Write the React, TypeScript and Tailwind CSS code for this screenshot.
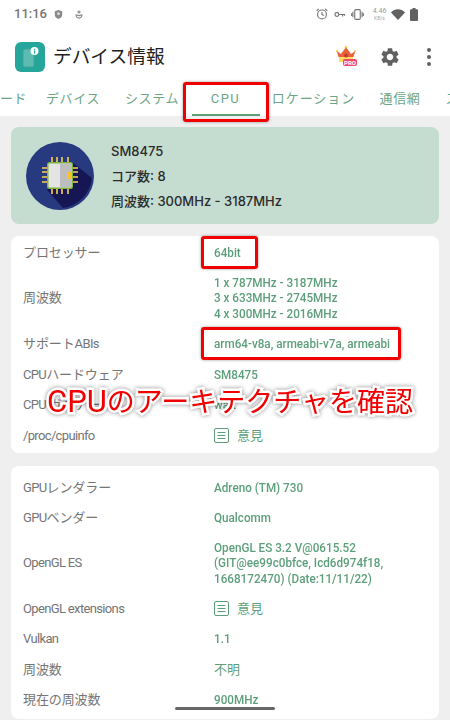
const jp = "font-['Roboto','Noto_Sans_CJK_JP',sans-serif]";

const cpuRows = [
  { label: "プロセッサー", value: ["64bit"], h: "h-[30.5px]" },
  { label: "周波数", value: ["1 x 787MHz - 3187MHz", "3 x 633MHz - 2745MHz", "4 x 300MHz - 2016MHz"], h: "h-[61px]" },
  { label: "サポートABIs", value: ["arm64-v8a, armeabi-v7a, armeabi"], h: "h-[30.5px]" },
  { label: "CPUハードウェア", value: ["SM8475"], h: "h-[30.5px]" },
  { label: "CPU ガバナー", value: ["walt"], h: "h-[30.5px]" },
  { label: "/proc/cpuinfo", view: true, h: "h-[30.5px]" },
];

const gpuRows = [
  { label: "GPUレンダラー", value: ["Adreno (TM) 730"], h: "h-[30.5px]" },
  { label: "GPUベンダー", value: ["Qualcomm"], h: "h-[30.5px]" },
  { label: "OpenGL ES", value: ["OpenGL ES 3.2 V@0615.52", "(GIT@ee99c0bfce, Icd6d974f18,", "1668172470) (Date:11/11/22)"], h: "h-[60px]" },
  { label: "OpenGL extensions", view: true, h: "h-[30.5px]" },
  { label: "Vulkan", value: ["1.1"], h: "h-[30.5px]" },
  { label: "周波数", value: ["不明"], h: "h-[30.5px]" },
  { label: "現在の周波数", value: ["900MHz"], h: "h-[30.5px]" },
];

type RowData = { label: string; value?: string[]; view?: boolean; h: string };

const gearPath =
  "M19.14 12.94c.04-.3.06-.61.06-.94 0-.32-.02-.64-.07-.94l2.03-1.58c.18-.14.23-.41.12-.61l-1.92-3.32c-.12-.22-.37-.29-.59-.22l-2.39.96c-.5-.38-1.03-.7-1.62-.94l-.36-2.54c-.04-.24-.24-.41-.48-.41h-3.84c-.24 0-.43.17-.47.41l-.36 2.54c-.59.24-1.13.57-1.62.94l-2.39-.96c-.22-.08-.47 0-.59.22L2.74 8.87c-.12.21-.08.47.12.61l2.03 1.58c-.05.3-.09.63-.09.94s.02.64.07.94l-2.03 1.58c-.18.14-.23.41-.12.61l1.92 3.32c.12.22.37.29.59.22l2.39-.96c.5.38 1.03.7 1.62.94l.36 2.54c.05.24.24.41.48.41h3.84c.24 0 .44-.17.47-.41l.36-2.54c.59-.24 1.13-.56 1.62-.94l2.39.96c.22.08.47 0 .59-.22l1.92-3.32c.12-.22.07-.47-.12-.61l-2.01-1.58zM12 15.6c-1.98 0-3.6-1.62-3.6-3.6s1.62-3.6 3.6-3.6 3.6 1.62 3.6 3.6-1.62 3.6-3.6 3.6z";

// the app's latin face is narrower than Roboto, so tighten the latin runs only
function Narrow({ text }: { text: string }) {
  const parts = text.split(/([\x20-\x7e]+)/).filter(Boolean);
  return (
    <>
      {parts.map((p, i) =>
        /[\x20-\x7e]/.test(p) ? (
          <span key={i} className="tracking-[-0.65px]">
            {p}
          </span>
        ) : (
          <span key={i}>{p}</span>
        ),
      )}
    </>
  );
}

function ViewLink() {
  return (
    <div className="flex items-center gap-[8px] text-[#5d9f7b]">
      <svg width="15" height="15" viewBox="0 0 15 15" fill="none" stroke="#5d9f7b" strokeWidth="1">
        <rect x="0.5" y="0.5" width="14" height="14" rx="1.5" />
        <path d="M3.500 4.500h8M3.500 7.500h8M3.500 10.500h8" />
      </svg>
      <span className="text-[13px]">意見</span>
    </div>
  );
}

function Row({ label, value, view, h }: RowData) {
  return (
    <div className={`flex items-center ${h}`}>
      <div className="w-[191px] shrink-0 text-[13px] text-[#757575] tracking-[-0.1px]">
        <Narrow text={label} />
      </div>
      {view ? (
        <ViewLink />
      ) : (
        <div className="text-[13px] leading-[15.4px] text-[#5d9f7b] whitespace-nowrap">
          {value?.map((line) => (
            <div key={line} className={/[\x20-\x7e]/.test(line) ? "font-medium origin-left scale-x-[0.9]" : ""}>
              {line}
            </div>
          ))}
        </div>
      )}
    </div>
  );
}

function StatusBar() {
  return (
    <div className="h-[28px] flex items-center pl-[14px] pr-[32px] bg-white text-[#757575]">
      <span className="text-[13px] font-medium">11:16</span>
      <svg className="ml-[7px]" width="9" height="11" viewBox="0 0 11 12" fill="#8a8a8a">
        <path d="M5.500 0.500 10 2v4c0 3-2 4.700-4.500 5.500C3 10.700 1 9 1 6V2z" />
        <circle cx="5.500" cy="5" r="1.800" fill="#d8d8d8" />
      </svg>
      <svg className="ml-[12px]" width="8" height="11" viewBox="0 0 11 12" fill="none" stroke="#8a8a8a" strokeWidth="1.500">
        <circle cx="5.500" cy="2.500" r="1.400" />
        <path d="M1.500 6.500c1 .2 2 1 4 1s3-.8 4-1c.3 2.500-1.500 4.500-4 4.500s-4.300-2-4-4.500z" />
      </svg>
      <div className="flex-1" />
      <svg width="12" height="12" viewBox="0 0 13 13" fill="none" stroke="#757575" strokeWidth="1.200">
        <circle cx="6.500" cy="7" r="4.800" />
        <path d="M6.500 4.200V7l2 1.200M0.800 3 3 0.900M12.200 3 10 0.900" />
      </svg>
      <svg className="ml-[6px]" width="12" height="7" viewBox="0 0 13 8" fill="none" stroke="#757575" strokeWidth="1.300">
        <circle cx="3" cy="4" r="2.200" />
        <path d="M5.200 4h7M9.500 4v2.200M11.700 4v1.500" />
      </svg>
      <svg className="ml-[5px]" width="13" height="11" viewBox="0 0 14 12" fill="none" stroke="#757575" strokeWidth="1.200">
        <rect x="4" y="0.700" width="6" height="10.600" rx="1" />
        <path d="M2 3v6M0.600 4.500v3M12 3v6M13.400 4.500v3" />
      </svg>
      <div className="ml-[7px] w-[17px] text-center">
        <div className="text-[7px] leading-[8px] text-[#9a9a9a]">4.46</div>
        <div className="text-[5px] leading-[6px] text-[#a8a8a8]">KB/s</div>
      </div>
      <svg className="ml-[3px]" width="14" height="11" viewBox="0 0 14 11" fill="#616161">
        <path d="M0 3.500C2 1.300 4.500 0.300 7 0.300s5 1 7 3.200L7 11z" />
      </svg>
      <svg className="ml-[5px]" width="8" height="13" viewBox="0 0 8 13" fill="#616161">
        <path d="M2.500 0h3v1.300H7a1 1 0 0 1 1 1V12a1 1 0 0 1-1 1H1a1 1 0 0 1-1-1V2.300a1 1 0 0 1 1-1h1.500z" />
      </svg>
    </div>
  );
}

function AppIcon() {
  return (
    <div className="w-[30px] h-[30px] rounded-[6px] bg-[#26a69a] flex items-center justify-center">
      <svg width="20" height="22" viewBox="0 0 20 22">
        <rect x="3" y="3" width="11" height="18" rx="1.500" fill="#5dbcb2" stroke="#3aa397" />
        <circle cx="14.500" cy="5" r="4" fill="#ffffff" />
        <rect x="14" y="4.500" width="1.200" height="3" fill="#26a69a" />
        <rect x="14" y="2.700" width="1.200" height="1.200" fill="#26a69a" />
      </svg>
    </div>
  );
}

function ProBadge() {
  return (
    <div className="relative w-[22px] h-[21px]">
      <svg width="20" height="17" viewBox="0 0 20 17">
        <path d="M3 16V9h14v7z" fill="#ffdd63" />
        <path d="M0.800 5 5 8 10 1l5 7 4.200-3L17.500 11h-15z" fill="#e8633a" />
        <circle cx="10" cy="9.500" r="2" fill="#c43c2c" />
        <circle cx="0.900" cy="5" r="1" fill="#ffc233" />
        <circle cx="10" cy="1.200" r="1.200" fill="#ffc233" />
        <circle cx="19.100" cy="5" r="1" fill="#ffc233" />
      </svg>
      <div className="absolute left-[7px] top-[13px] w-[14px] h-[7px] rounded-[2px] bg-[#f0476b] text-white text-[6px] leading-[7px] font-bold text-center">
        PRO
      </div>
    </div>
  );
}

function ChipLogo() {
  return (
    <svg width="68" height="68" viewBox="0 0 68 68">
      <circle cx="34" cy="34" r="34" fill="#273a80" />
      <path d="M47 21 66 36A34 34 0 0 1 37 66L21 48z" fill="#171655" />
      <g stroke="#fbd24e" strokeWidth="1.600">
        <path d="M26 15v6M31 15v6M36 15v6M42 15v6" />
        <path d="M26 46v6M31 46v6M36 46v6M42 46v6" />
        <path d="M16 26h6M16 30h6M16 35h6M16 40h6" />
        <path d="M46 26h6M46 30h6M46 35h6M46 40h6" />
      </g>
      <rect x="21" y="20" width="26" height="27" rx="2.500" fill="#7cb63c" />
      <rect x="22.500" y="21.500" width="23" height="24" rx="1" fill="#e4e4e4" />
      <rect x="34" y="21.500" width="11.500" height="24" fill="#bdbdbd" />
      <rect x="41" y="30" width="4" height="7" fill="#fbc02d" />
    </svg>
  );
}

export default function App() {
  const tabs = [
    { name: "ード", cls: "w-[33.500px] text-right pr-[12.500px] tracking-[0.6px]" },
    { name: "デバイス", cls: "w-[79px] text-center tracking-[0.6px]" },
    { name: "システム", cls: "w-[79px] text-center tracking-[0.6px]" },
    { name: "CPU", cls: "w-[68px] text-center tracking-[1.4px]", active: true },
    { name: "ロケーション", cls: "w-[108px] text-center tracking-[1px]" },
    { name: "通信網", cls: "w-[65px] text-center tracking-[0.6px]" },
    { name: "ストレージ", cls: "w-[90px] pl-[13px] tracking-[0.6px]" },
  ];

  return (
    <div className={`relative w-[450px] h-[720px] overflow-hidden bg-[#efefef] ${jp}`}>
      <StatusBar />

      <div className="h-[57px] bg-white flex items-center pl-[15px]">
        <AppIcon />
        <span className="ml-[8px] pt-[1px] text-[18.700px] text-[#212121]">デバイス情報</span>
        <div className="flex-1" />
        <ProBadge />
        <svg className="ml-[21px]" width="22" height="22" viewBox="0 0 24 24" fill="#616161">
          <path d={gearPath} />
        </svg>
        <div className="ml-[26px] mr-[19px] flex flex-col gap-[3px]">
          <div className="w-[4px] h-[4px] rounded-full bg-[#616161]" />
          <div className="w-[4px] h-[4px] rounded-full bg-[#616161]" />
          <div className="w-[4px] h-[4px] rounded-full bg-[#616161]" />
        </div>
      </div>

      <div className="h-[31px] bg-white flex overflow-hidden whitespace-nowrap">
        {tabs.map((t) => (
          <div key={t.name} className={`shrink-0 h-full relative pt-[4px] text-[13px] text-[#6aa586] ${t.cls}`}>
            {t.name}
            {t.active && <div className="absolute left-0 right-0 bottom-0 h-[2px] bg-[#5d9f7b]" />}
          </div>
        ))}
      </div>

      <div className="px-[11px] pt-[11px] flex flex-col">
        <div className="h-[97px] rounded-[8px] bg-[#c5dcd0] flex items-center pl-[15px]">
          <ChipLogo />
          <div className="ml-[17px] flex flex-col gap-[7px] text-[13px] leading-[18px] font-medium text-[#2b2b2b] font-['Inter','Noto_Sans_CJK_JP',sans-serif]">
            <div>SM8475</div>
            <div>コア数: 8</div>
            <div>周波数: 300MHz - 3187MHz</div>
          </div>
        </div>

        <div className="mt-[12px] h-[217px] rounded-[8px] bg-white px-[12px] pt-[1px]">
          {cpuRows.map((r) => (
            <Row key={r.label} {...r} />
          ))}
        </div>

        <div className="mt-[13px] rounded-[8px] bg-white px-[12px] pt-[6px] pb-[4px]">
          {gpuRows.map((r) => (
            <Row key={r.label} {...r} />
          ))}
        </div>
      </div>

      {/* red annotations pasted over the screenshot */}
      <div className="absolute left-[183px] top-[82px] w-[86px] h-[40px] rounded-[3px] border-[3px] border-[#f00000] shadow-[0_0_3px_rgba(0,0,0,0.4)]" />
      <div className="absolute left-[201px] top-[236px] w-[57px] h-[33px] rounded-[3px] border-[3px] border-[#f00000] shadow-[0_0_3px_rgba(0,0,0,0.4)]" />
      <div className="absolute left-[201px] top-[327px] w-[200px] h-[33px] rounded-[3px] border-[3px] border-[#f00000] shadow-[0_0_3px_rgba(0,0,0,0.4)]" />
      <div className="absolute left-[47px] top-[384px] whitespace-nowrap leading-[36px] text-[#f00000] [-webkit-text-stroke:5px_#ffffff] [paint-order:stroke_fill] drop-shadow-[0_0_2px_rgba(0,0,0,0.45)]">
        <span className="text-[31px]">CPU</span>
        <span className="text-[28px]">のアーキテクチャを確認</span>
      </div>

      <div className="absolute left-[175px] top-[707px] w-[100px] h-[3px] rounded-full bg-[#666666]" />
    </div>
  );
}
